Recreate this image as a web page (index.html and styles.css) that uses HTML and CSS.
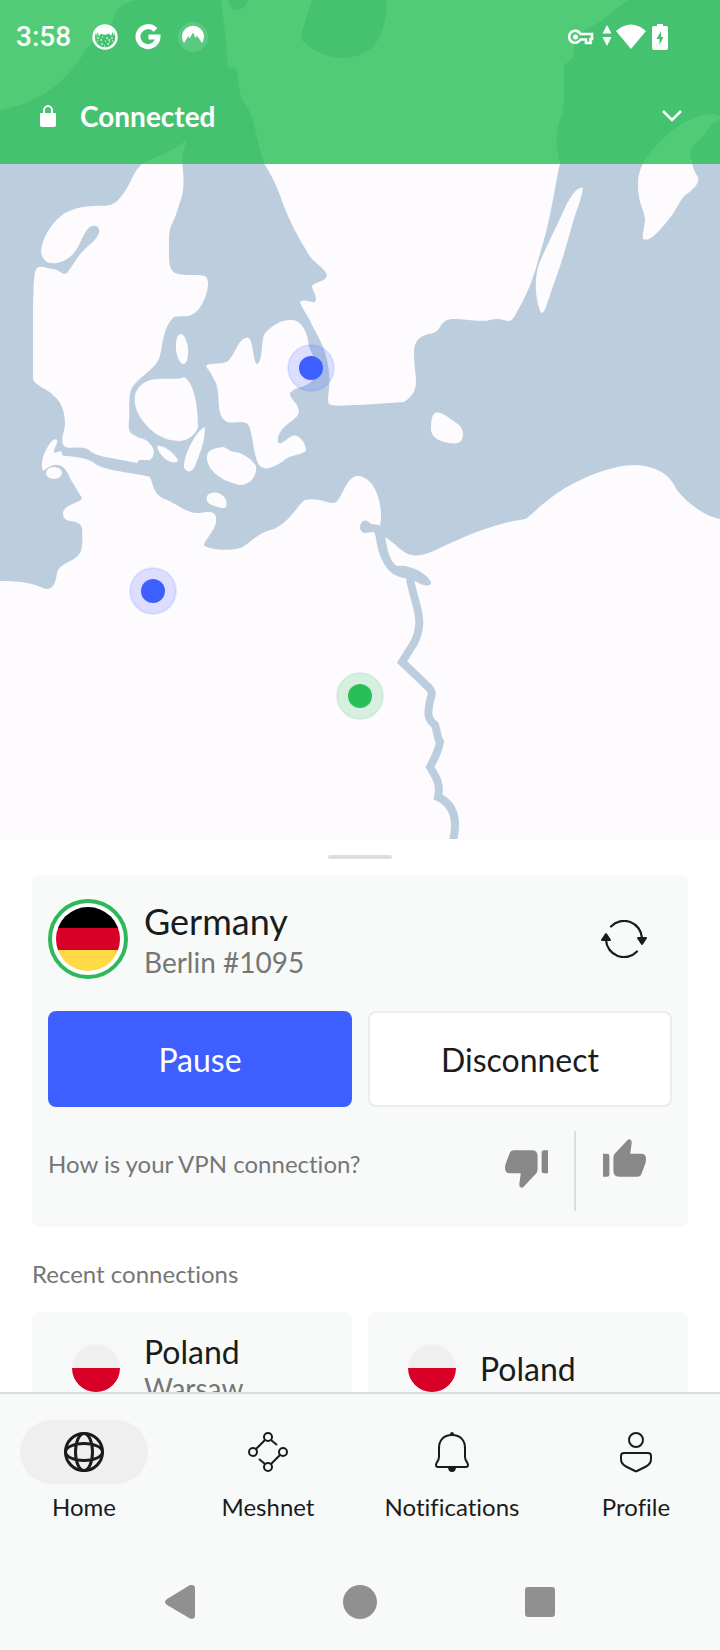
FILE: index.html
```html
<!DOCTYPE html>
<html lang="en">
<head>
<meta charset="utf-8">
<meta name="viewport" content="width=device-width, initial-scale=1">
<title>VPN</title>
<link rel="stylesheet" href="styles.css">
</head>
<body>
<div class="app">
  <section class="map">
    <svg class="map-canvas" viewBox="0 0 720 839" preserveAspectRatio="xMidYMax slice" role="img" aria-label="Server map">
      <rect class="sea" width="720" height="839"/>
      <g class="land">
        <!-- Norway -->
        <path d="M0 0H137Q118 3 113 19C112 33 95 38 86 50C68 78 45 102 0 110Z"/>
        <!-- Sweden -->
        <path d="M221 0L226 40L228 67L237 69L240 93C241 100 248 106 252 117C257 135 259 150 265 165C270 173 274 180 280 195C289 222 298 236 309 255C315 264 325 268 327 275C326 283 313 281 312 287C313 292 318 297 315 302C311 303 304 298 300 302C302 309 308 315 311 323C317 335 325 346 328 365C332 385 326 400 329 404C334 407 345 405 360 405L404 402C413 396 416 390 416 381C416 372 414 368 414 350C415 341 419 338 423 336C430 333 434 334 438 330C443 321 446 319 455 319C475 320 480 322 490 320C500 317 504 321 509 321C514 319 515 315 518 310C528 293 535 273 539 257C551 220 554 190 560 163C555 146 555 130 562 115C566 100 563 75 564 65L573 58C573 35 585 29 598 23C610 15 618 7 628 0Z"/>
        <!-- Oland -->
        <path d="M583 188C577 186 570 197 563 212C556 228 545 249 539 264C534 278 535 299 541 313C545 313 546 306 550 295C562 262 566 247 571 229C576 211 581 201 583 188Z"/>
        <!-- Gotland -->
        <path d="M720 116C710 111 689 117 673 130C656 145 638 160 638 185C638 202 643 208 645 218C645 225 642 234 643 239C650 243 660 230 669 219C676 211 679 202 684 196C694 189 700 183 698 177C695 172 692 168 692 160C686 150 696 142 704 136C709 128 713 122 720 119Z"/>
        <!-- Jutland -->
        <path d="M187 139C179 148 163 154 143 163C133 171 131 184 123 194C117 203 112 205 105 206C90 205 72 207 61 216C51 224 42 238 41 252C43 262 49 264 57 263C67 261 74 255 79 245C84 234 88 226 93 226C98 225 101 230 98 235C95 242 85 247 78 257L67 273C63 276 60 270 53 269C46 268 41 265 37 268C33 273 34 290 33 305V379C35 386 47 388 54 396C63 404 65 414 65 425C64 434 60 440 64 446C68 450 82 445 89 450C96 457 109 457 137 463L139 460H150C154 457 156 450 150 444C146 438 140 439 136 436C129 434 128 429 129 420C130 410 128 398 131 390C135 379 156 370 160 356C163 344 163 327 174 317C182 315 190 319 198 310C206 301 211 282 206 277C200 273 185 277 175 273C168 269 169 260 169 243C169 222 173 227 179 205C185 190 184 180 182 160C183 152 185 146 187 139Z"/>
        <!-- Germany and Poland -->
        <path d="M63 456L61 451L54 453C54 447 58 444 57 440C53 436 47 448 44 454C42 460 41 467 43 471C46 469 49 466 54 465C64 463 68 473 71 480L82 498C81 503 64 504 63 513C63 526 79 517 82 528C83 541 82 550 80 553C75 562 60 562 57 573C56 580 54 589 47 589C39 588 36 581 0 581V839H720V519C704 516 687 503 677 490C672 480 664 467 636 465C606 465 570 484 556 494C534 510 529 518 525 519C503 522 475 532 460 539C440 547 424 558 412 555C403 554 395 543 385 537L378 533L380 526C384 507 376 477 358 476C345 476 342 502 334 503C327 503 317 497 305 500C299 503 290 522 274 529C255 533 247 548 236 549C225 551 206 549 204 545C204 541 217 528 216 520C217 511 209 511 200 513C187 514 179 505 167 500C153 495 154 486 150 477C136 473 107 471 97 465C87 457 76 457 66 456Z"/>
        <!-- Zealand -->
        <path d="M207 368C202 361 225 366 229 360C236 353 239 336 249 338C254 344 253 363 257 364C264 361 260 337 266 332C273 325 281 320 290 320C302 319 308 333 309 347C314 357 318 367 314 378C308 389 297 385 290 393C289 399 299 403 299 412C297 422 277 425 278 442C282 448 289 433 297 436C303 439 306 446 306 451C299 456 290 454 282 462C271 469 261 472 257 461C253 449 253 436 249 426C245 419 237 424 227 422C215 415 221 397 216 383C213 378 211 372 207 368Z"/>
        <!-- Funen -->
        <path d="M135 397C135 390 143 379 158 379C172 378 179 380 184 377C194 383 198 405 198 427C195 436 188 440 180 441C163 441 151 432 142 420C136 411 134 404 135 397Z"/>
        <path d="M205 427C197 430 184 453 184 467C186 473 192 473 195 466C199 455 205 443 205 427Z"/>
        <path d="M157 446C163 444 176 454 178 461C172 466 159 457 157 446Z"/>
        <path d="M222 447C213 449 206 450 207 459C209 474 226 482 240 485C250 485 257 477 256 466C251 458 242 453 235 452C229 452 227 447 222 447Z"/>
        <path d="M207 496C211 490 223 492 226 500C228 509 224 509 218 507C211 505 205 503 207 496Z"/>
        <ellipse cx="182" cy="349" rx="6" ry="15" transform="rotate(-6 182 349)"/>
        <ellipse cx="54" cy="473" rx="8" ry="6"/>
        <!-- Bornholm -->
        <path d="M435 413C441 411 446 416 452 420C460 425 463 428 463 435C462 444 456 444 449 443C442 442 432 439 431 430C431 424 431 416 435 413Z"/>
      </g>
      <!-- lakes of southern Sweden -->
      <path class="sea" d="M312 0Q305 20 301 36C300 42 308 44 314 50C332 60 352 61 367 51C381 44 387 20 387 0ZM228 0C229 13 242 14 249 0Z"/>
      <!-- Oder -->
      <path class="sea" d="M360 527C361 520 366 518 371 524L379 525L385 536C387 549 390 562 397 566C409 564 427 573 431 582C432 587 423 586 417 582L410 579C398 577 390 576 382 560C376 548 377 537 374 532L364 533Q360 531 360 527Z"/>
      <path class="river" d="M410 577C412 600 427 618 414 643L402 662L425 684Q434 691 431 697C427 713 427 719 435 725C438 734 437 738 440 742C438 753 434 759 430 767C436 777 441 784 438 797C451 803 459 816 453 841"/>
      <g class="pin"><circle class="halo" cx="311" cy="368" r="23"/><circle cx="311" cy="368" r="12"/></g>
      <g class="pin"><circle class="halo" cx="153" cy="591" r="23"/><circle cx="153" cy="591" r="12"/></g>
      <g class="pin pin-active"><circle class="halo" cx="360" cy="696" r="23"/><circle cx="360" cy="696" r="12"/></g>
    </svg>

    <header class="header">
      <div class="status">
        <div class="status-left">
          <time>3:58</time>
          <svg width="26" height="26" viewBox="0 0 26 26" aria-hidden="true">
            <circle cx="13" cy="13" r="11.500" fill="none" stroke="#fff" stroke-width="2.400"/>
            <path class="white" d="M3 6Q13-4 23 6L22 12L20.500 8L19 12L17 9.500Q13 12 9 9.500L7 12L5.500 8L4 12Z"/>
            <path class="dots" d="M5 14H7M19 14H21M8 16H10M16 16H18M10 13H11M14 14H16M9 20H11M13 17H14M15 20H17M12 22H13M5 17H6M20 17H21M17 18H18"/>
          </svg>
          <svg width="26" height="26" viewBox="0 0 26 26" aria-hidden="true">
            <path d="M20.500 6A10 10 0 1 0 23 13H13.500" fill="none" stroke="#fff" stroke-width="5"/>
          </svg>
          <svg width="30" height="30" viewBox="0 0 30 30" aria-hidden="true">
            <circle cx="15" cy="15" r="15" fill="#fff" opacity=".12"/>
            <path class="white" d="M6 21A11 11 0 1 1 24 21L19 13.500L17.500 16L15 10.500L11.500 16.500L10.500 14Z"/>
          </svg>
        </div>
        <div class="status-right">
          <svg width="26" height="16" viewBox="0 0 26 16" aria-hidden="true">
            <path d="M12.500 5H24V10H22.500V14H18V10.500H12.500A6 6 0 1 1 12.500 5Z" fill="none" stroke="#fff" stroke-width="2.600"/>
            <circle cx="7.500" cy="8" r="2.500" class="white"/>
          </svg>
          <svg class="traffic" width="10" height="26" viewBox="0 0 10 26" aria-hidden="true">
            <path class="white" d="M5 1L9.500 9.500H.5ZM.5 13H9.500L5 22Z"/>
          </svg>
          <svg width="30" height="26" viewBox="0 0 30 26" aria-hidden="true">
            <path class="white" d="M0 7Q15-6 30 7L15 25Z"/>
          </svg>
          <svg class="battery" width="16" height="26" viewBox="0 0 16 26" aria-hidden="true">
            <path class="white" fill-rule="evenodd" d="M5 0H11V2H14Q16 2 16 4V24Q16 26 14 26H2Q0 26 0 24V4Q0 2 2 2H5ZM9 7L4.500 15H7.500V21L11.500 13H9Z"/>
          </svg>
        </div>
      </div>
      <button class="connection" type="button">
        <svg width="16" height="22" viewBox="0 0 16 22" aria-hidden="true">
          <path class="white" d="M1 8H15Q16 8 16 9V20Q16 22 14 22H2Q0 22 0 20V9Q0 8 1 8Z"/>
          <path d="M4 9V5.500A4 4.500 0 0 1 12 5.500V9" fill="none" stroke="#fff" stroke-width="2"/>
        </svg>
        <span>Connected</span>
        <svg width="20" height="12" viewBox="0 0 20 12" aria-hidden="true">
          <path d="M1 1L10 10L19 1" fill="none" stroke="#fff" stroke-width="2.600"/>
        </svg>
      </button>
    </header>
  </section>

  <main class="sheet">
    <div class="handle"></div>
    <section class="card">
      <div class="server">
        <svg class="server-flag" viewBox="0 0 80 80" role="img" aria-label="Flag of Germany">
          <defs><clipPath id="disc"><circle cx="40" cy="40" r="32"/></clipPath></defs>
          <circle cx="40" cy="40" r="38" fill="#fff" stroke="#2fb85a" stroke-width="4"/>
          <g clip-path="url(#disc)">
            <path d="M8 8H72V29H8Z" fill="#000"/>
            <path d="M8 29H72V51H8Z" fill="#d80027"/>
            <path d="M8 51H72V72H8Z" fill="#ffda44"/>
          </g>
        </svg>
        <div class="server-text">
          <h1>Germany</h1>
          <p>Berlin #1095</p>
        </div>
        <button class="icon-button" type="button" aria-label="Reconnect">
          <svg width="46" height="38" viewBox="0 0 46 38" aria-hidden="true">
            <path d="M10 6.500A18 18 0 0 1 41 18M36 31.500A18 18 0 0 1 5 20" fill="none" stroke="#1a1c1c" stroke-width="2.200" stroke-linecap="round"/>
            <path d="M37 18H45L41 24Z M1 20L5 14L9 20Z" fill="#1a1c1c" stroke="#1a1c1c" stroke-width="2" stroke-linejoin="round"/>
          </svg>
        </button>
      </div>
      <div class="actions">
        <button class="button primary" type="button">Pause</button>
        <button class="button" type="button">Disconnect</button>
      </div>
      <div class="feedback">
        <p>How is your VPN connection?</p>
        <button class="thumb down" type="button" aria-label="Bad">
          <svg width="43" height="38" viewBox="434 873 128 112" aria-hidden="true">
            <path d="M456 873H514Q531 873 531 890V930Q531 938 526 943L490 981Q485 988 478 981Q476 978 477 971L481 942H448Q434 942 434 926Q434 918 436 913L448 881Q451 873 459 873ZM543 880Q543 873 550 873H562V942H550Q543 942 543 935Z"/>
          </svg>
        </button>
        <button class="thumb up" type="button" aria-label="Good">
          <svg width="43" height="38" viewBox="434 873 128 112" aria-hidden="true">
            <path transform="rotate(180 498 929)" d="M456 873H514Q531 873 531 890V930Q531 938 526 943L490 981Q485 988 478 981Q476 978 477 971L481 942H448Q434 942 434 926Q434 918 436 913L448 881Q451 873 459 873ZM543 880Q543 873 550 873H562V942H550Q543 942 543 935Z"/>
          </svg>
        </button>
      </div>
    </section>

    <h2>Recent connections</h2>
    <div class="recents">
      <button class="recent" type="button">
        <span class="flag-pl"></span>
        <span class="recent-text"><span class="country">Poland</span><span class="city">Warsaw</span></span>
      </button>
      <button class="recent" type="button">
        <span class="flag-pl"></span>
        <span class="recent-text"><span class="country">Poland</span></span>
      </button>
    </div>
  </main>

  <nav class="tabs">
    <a class="tab" href="#home" aria-current="page">
      <span class="tab-icon">
        <svg viewBox="0 0 40 40" aria-hidden="true">
          <circle cx="20" cy="20" r="18.500"/><ellipse cx="20" cy="20" rx="8.500" ry="18.500"/><ellipse cx="20" cy="20" rx="18.500" ry="8.500"/>
        </svg>
      </span>
      Home
    </a>
    <a class="tab" href="#meshnet">
      <span class="tab-icon">
        <svg viewBox="0 0 40 40" aria-hidden="true">
          <circle cx="20" cy="5" r="4"/><circle cx="5" cy="20" r="4"/><circle cx="35" cy="20" r="4"/><circle cx="20" cy="35" r="4"/>
          <path d="M17 8L8 17M23 8L29 13M32 23L23 32M17 32L11 27"/>
        </svg>
      </span>
      Meshnet
    </a>
    <a class="tab" href="#notifications">
      <span class="tab-icon">
        <svg viewBox="0 0 40 40" aria-hidden="true">
          <path d="M20 3C11 3 7 9 7 16V25C7 29 4 30 4 33Q4 35 6 35H34Q36 35 36 33C36 30 33 29 33 25V16C33 9 29 3 20 3Z"/>
          <path class="ink" d="M18 3Q18 0 20 0T22 3ZM16 35H24Q24 40 20 40T16 35Z"/>
        </svg>
      </span>
      Notifications
    </a>
    <a class="tab" href="#profile">
      <span class="tab-icon">
        <svg viewBox="0 0 40 40" aria-hidden="true">
          <circle cx="20" cy="8" r="7"/>
          <path d="M8 21H32Q35 21 35 24V27Q35 32 30 34.500L21 39Q20 39.500 19 39L10 34.500Q5 32 5 27V24Q5 21 8 21Z"/>
        </svg>
      </span>
      Profile
    </a>
  </nav>

  <footer class="system">
    <button type="button" aria-label="Back">
      <svg width="34" height="34" viewBox="0 0 34 34" aria-hidden="true"><path d="M27 0Q32 -1 32 4V30Q32 35 27 33.500L4 20Q0 17 4 14Z"/></svg>
    </button>
    <button type="button" aria-label="Home screen">
      <svg width="34" height="34" viewBox="0 0 34 34" aria-hidden="true"><circle cx="17" cy="17" r="17"/></svg>
    </button>
    <button type="button" aria-label="Recent apps">
      <svg width="34" height="34" viewBox="0 0 34 34" aria-hidden="true"><rect x="2" y="2" width="30" height="30" rx="3"/></svg>
    </button>
  </footer>
</div>
</body>
</html>
```
FILE: styles.css
```css
* {
  box-sizing: border-box;
}

body {
  margin: 0;
  background: #fff;
  color: #1a1c1c;
  font-family: Lato, "Open Sans", sans-serif;
  font-size: 24px;
  font-variant-ligatures: none;
  line-height: 29px;
}

h1,
h2,
p {
  margin: 0;
  font-weight: 400;
}

button {
  margin: 0;
  padding: 0;
  border: 0;
  background: none;
  color: inherit;
  font: inherit;
  font-variant-ligatures: inherit;
  cursor: pointer;
}

svg {
  display: block;
}

.app {
  display: flex;
  flex-direction: column;
  height: 100vh;
}

/* Map */

.map {
  position: relative;
  flex: none;
  aspect-ratio: 720 / 839;
}

.map-canvas {
  width: 100%;
  height: 100%;
}

.sea {
  fill: #bccede;
}

.land {
  fill: #fefbff;
}

.river {
  fill: none;
  stroke: #bccede;
  stroke-width: 8;
}

.pin {
  fill: #3d5fff;
  stroke: #3d5fff;
  stroke-width: 0;
}

.pin-active {
  fill: #29bf57;
  stroke: #29bf57;
}

.halo {
  fill-opacity: .18;
  stroke-opacity: .12;
  stroke-width: 2;
}

.header {
  position: absolute;
  inset: 0 0 auto;
  padding-bottom: 6px;
  background: rgba(43, 192, 87, .82);
  color: #fff;
}

.white {
  fill: #fff;
}

.dots {
  stroke: #fff;
  stroke-width: 1;
}

.status {
  display: flex;
  align-items: center;
  justify-content: space-between;
  height: 74px;
  padding: 0 52px 0 16px;
  font: 500 28px/32px Roboto, sans-serif;
}

.status-left {
  display: flex;
  align-items: center;
  gap: 17px;
}

.status-left time {
  margin-right: 4px;
}

.status-right {
  display: flex;
  align-items: center;
  gap: 4px;
}

.traffic {
  margin-left: 4px;
}

.battery {
  margin-left: 2px;
}

.connection {
  display: flex;
  align-items: center;
  gap: 24px;
  width: 100%;
  height: 84px;
  padding: 0 38px 0 40px;
  font-size: 28px;
  font-weight: 700;
  line-height: 34px;
}

.connection span {
  flex: 1;
  text-align: left;
}

/* Bottom sheet */

.sheet {
  position: relative;
  flex: 1;
  min-height: 0;
  padding: 16px 32px 0;
  overflow: hidden;
  background: #fff;
}

.handle {
  width: 64px;
  height: 4px;
  margin: 0 auto 16px;
  border-radius: 2px;
  background: #dedede;
}

.card {
  display: flex;
  flex-direction: column;
  padding: 24px 16px 16px;
  border-radius: 8px;
  background: #f8faf9;
}

.server {
  display: flex;
  align-items: center;
  gap: 16px;
  margin-bottom: 32px;
}

.server-flag {
  width: 80px;
  height: 80px;
}

.server-text {
  flex: 1;
  padding-top: 2px;
}

.server h1 {
  font-size: 36px;
  line-height: 44px;
}

.server p {
  color: #767676;
  font-size: 28px;
  line-height: 38px;
}

.server-text,
.icon-button {
  margin: -2px 0;
}

.icon-button {
  display: grid;
  place-items: center;
  width: 96px;
  height: 80px;
}

.actions {
  display: grid;
  grid-template-columns: 1fr 1fr;
  gap: 16px;
  margin-bottom: 24px;
}

.button {
  height: 96px;
  padding-top: 2px;
  border: 2px solid #ebeded;
  border-radius: 8px;
  background: #fff;
  font-size: 32px;
  line-height: 38px;
}

.primary {
  border-color: #3d5fff;
  background: #3d5fff;
  color: #fff;
}

.feedback {
  display: flex;
  align-items: center;
  height: 80px;
  color: #767676;
}

.feedback p {
  flex: 1;
  padding-bottom: 16px;
}

.thumb {
  display: grid;
  place-items: center;
  width: 96px;
  height: 100%;
  fill: #888;
}

.down {
  padding-bottom: 4px;
}

.up {
  width: 98px;
  padding-bottom: 26px;
  border-left: 2px solid #dcdede;
}

.sheet h2 {
  margin: 32px 0 24px;
  color: #767676;
  font-size: 24px;
  line-height: 29px;
}

.recents {
  display: grid;
  grid-template-columns: 1fr 1fr;
  gap: 16px;
}

.recent {
  display: flex;
  align-items: center;
  gap: 24px;
  height: 112px;
  padding: 0 40px;
  border-radius: 8px;
  background: #f8faf9;
  text-align: left;
}

.flag-pl {
  width: 48px;
  height: 48px;
  border-radius: 50%;
  background: linear-gradient(#f0f0f0 50%, #d80027 50%);
}

.recent-text {
  display: flex;
  flex-direction: column;
  padding-top: 2px;
}

.country {
  font-size: 32px;
  line-height: 38px;
}

.city {
  color: #767676;
  font-size: 28px;
  line-height: 34px;
}

/* Tab bar */

.tabs {
  display: grid;
  flex: none;
  grid-template-columns: repeat(4, 1fr);
  gap: 16px;
  padding: 26px 0 33px;
  border-top: 2px solid #dcdede;
  background: #f8faf9;
}

.tab {
  display: flex;
  flex-direction: column;
  align-items: center;
  gap: 8px;
  color: inherit;
  text-decoration: none;
}

.tab-icon {
  display: grid;
  place-items: center;
  width: 128px;
  height: 64px;
  border-radius: 32px;
}

.tab[aria-current] .tab-icon {
  background: #efefef;
}

.tab svg {
  width: 40px;
  height: 40px;
  overflow: visible;
  fill: none;
  stroke: #1a1c1c;
  stroke-width: 2;
}

.tab[aria-current] svg {
  stroke-width: 3;
}

.tab .ink {
  fill: #1a1c1c;
  stroke: none;
}

/* System navigation */

.system {
  display: grid;
  flex: none;
  grid-template-columns: repeat(3, 1fr);
  height: 96px;
  padding: 0 12.5%;
  background: #f8faf9;
}

.system button {
  display: grid;
  place-items: center;
  fill: #909090;
}
```
